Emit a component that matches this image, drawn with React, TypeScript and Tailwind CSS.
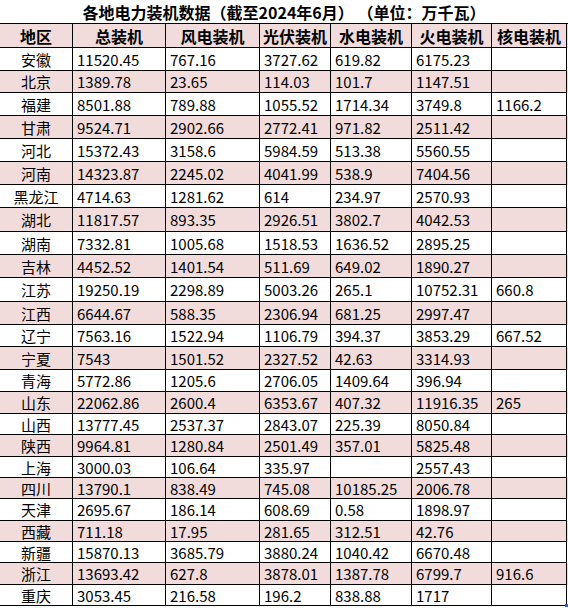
import React from "react";

const cols = ["地区", "总装机", "风电装机", "光伏装机", "水电装机", "火电装机", "核电装机"];

const rows: string[][] = [
  ["安徽", "11520.45", "767.16", "3727.62", "619.82", "6175.23", ""],
  ["北京", "1389.78", "23.65", "114.03", "101.7", "1147.51", ""],
  ["福建", "8501.88", "789.88", "1055.52", "1714.34", "3749.8", "1166.2"],
  ["甘肃", "9524.71", "2902.66", "2772.41", "971.82", "2511.42", ""],
  ["河北", "15372.43", "3158.6", "5984.59", "513.38", "5560.55", ""],
  ["河南", "14323.87", "2245.02", "4041.99", "538.9", "7404.56", ""],
  ["黑龙江", "4714.63", "1281.62", "614", "234.97", "2570.93", ""],
  ["湖北", "11817.57", "893.35", "2926.51", "3802.7", "4042.53", ""],
  ["湖南", "7332.81", "1005.68", "1518.53", "1636.52", "2895.25", ""],
  ["吉林", "4452.52", "1401.54", "511.69", "649.02", "1890.27", ""],
  ["江苏", "19250.19", "2298.89", "5003.26", "265.1", "10752.31", "660.8"],
  ["江西", "6644.67", "588.35", "2306.94", "681.25", "2997.47", ""],
  ["辽宁", "7563.16", "1522.94", "1106.79", "394.37", "3853.29", "667.52"],
  ["宁夏", "7543", "1501.52", "2327.52", "42.63", "3314.93", ""],
  ["青海", "5772.86", "1205.6", "2706.05", "1409.64", "396.94", ""],
  ["山东", "22062.86", "2600.4", "6353.67", "407.32", "11916.35", "265"],
  ["山西", "13777.45", "2537.37", "2843.07", "225.39", "8050.84", ""],
  ["陕西", "9964.81", "1280.84", "2501.49", "357.01", "5825.48", ""],
  ["上海", "3000.03", "106.64", "335.97", "", "2557.43", ""],
  ["四川", "13790.1", "838.49", "745.08", "10185.25", "2006.78", ""],
  ["天津", "2695.67", "186.14", "608.69", "0.58", "1898.97", ""],
  ["西藏", "711.18", "17.95", "281.65", "312.51", "42.76", ""],
  ["新疆", "15870.13", "3685.79", "3880.24", "1040.42", "6670.48", ""],
  ["浙江", "13693.42", "627.8", "3878.01", "1387.78", "6799.7", "916.6"],
  ["重庆", "3053.45", "216.58", "196.2", "838.88", "1717", ""],
];

// row heights differ a little, as in the sheet
const heights = [
  "h-[23px]", "h-[22px]", "h-[23px]",
  "h-[23px]", "h-[23px]", "h-[23px]", "h-[23px]", "h-[24px]", "h-[23px]", "h-[23px]", "h-[24px]", "h-[23px]",
  "h-[22px]", "h-[23px]", "h-[22px]", "h-[22px]",
  "h-[21px]", "h-[22px]", "h-[21px]", "h-[21px]", "h-[22px]", "h-[21px]", "h-[21px]", "h-[22px]", "h-[21px]",
];

const grid = "grid grid-cols-[73px_93px_94px_71px_81px_80px_75px]";

export default function App() {
  return (
    <div
      className="relative w-[568px] h-[608px] bg-white text-black overflow-hidden"
      style={{ fontFamily: '"Noto Sans CJK SC", "Noto Sans", sans-serif' }}
    >
      <div className="h-[24px] border-b border-black flex items-center justify-center text-[16px] font-bold leading-none">
        各地电力装机数据（截至2024年6月） （单位：万千瓦）
      </div>
      <div className={`${grid} h-[24px] bg-[#f2dcdb]`}>
        {cols.map((c) => (
          <div
            key={c}
            className="border-r border-b border-black flex items-center justify-center text-[16px] font-bold leading-none"
          >
            {c}
          </div>
        ))}
      </div>
      {rows.map((r, i) => (
        <div
          key={r[0]}
          className={`${grid} ${heights[i]} ${i % 2 === 1 ? "bg-[#f2dcdb]" : "bg-white"}`}
        >
          {r.map((v, j) => (
            <div
              key={j}
              className={`border-r border-b border-black flex items-center text-[15px] leading-none ${
                j === 0 ? "justify-center" : "pl-[4px]"
              }`}
            >
              {v}
            </div>
          ))}
        </div>
      ))}
      <div className="absolute right-0 bottom-[1px] w-[3px] h-[3px] bg-[#3b5fc0]" />
    </div>
  );
}
